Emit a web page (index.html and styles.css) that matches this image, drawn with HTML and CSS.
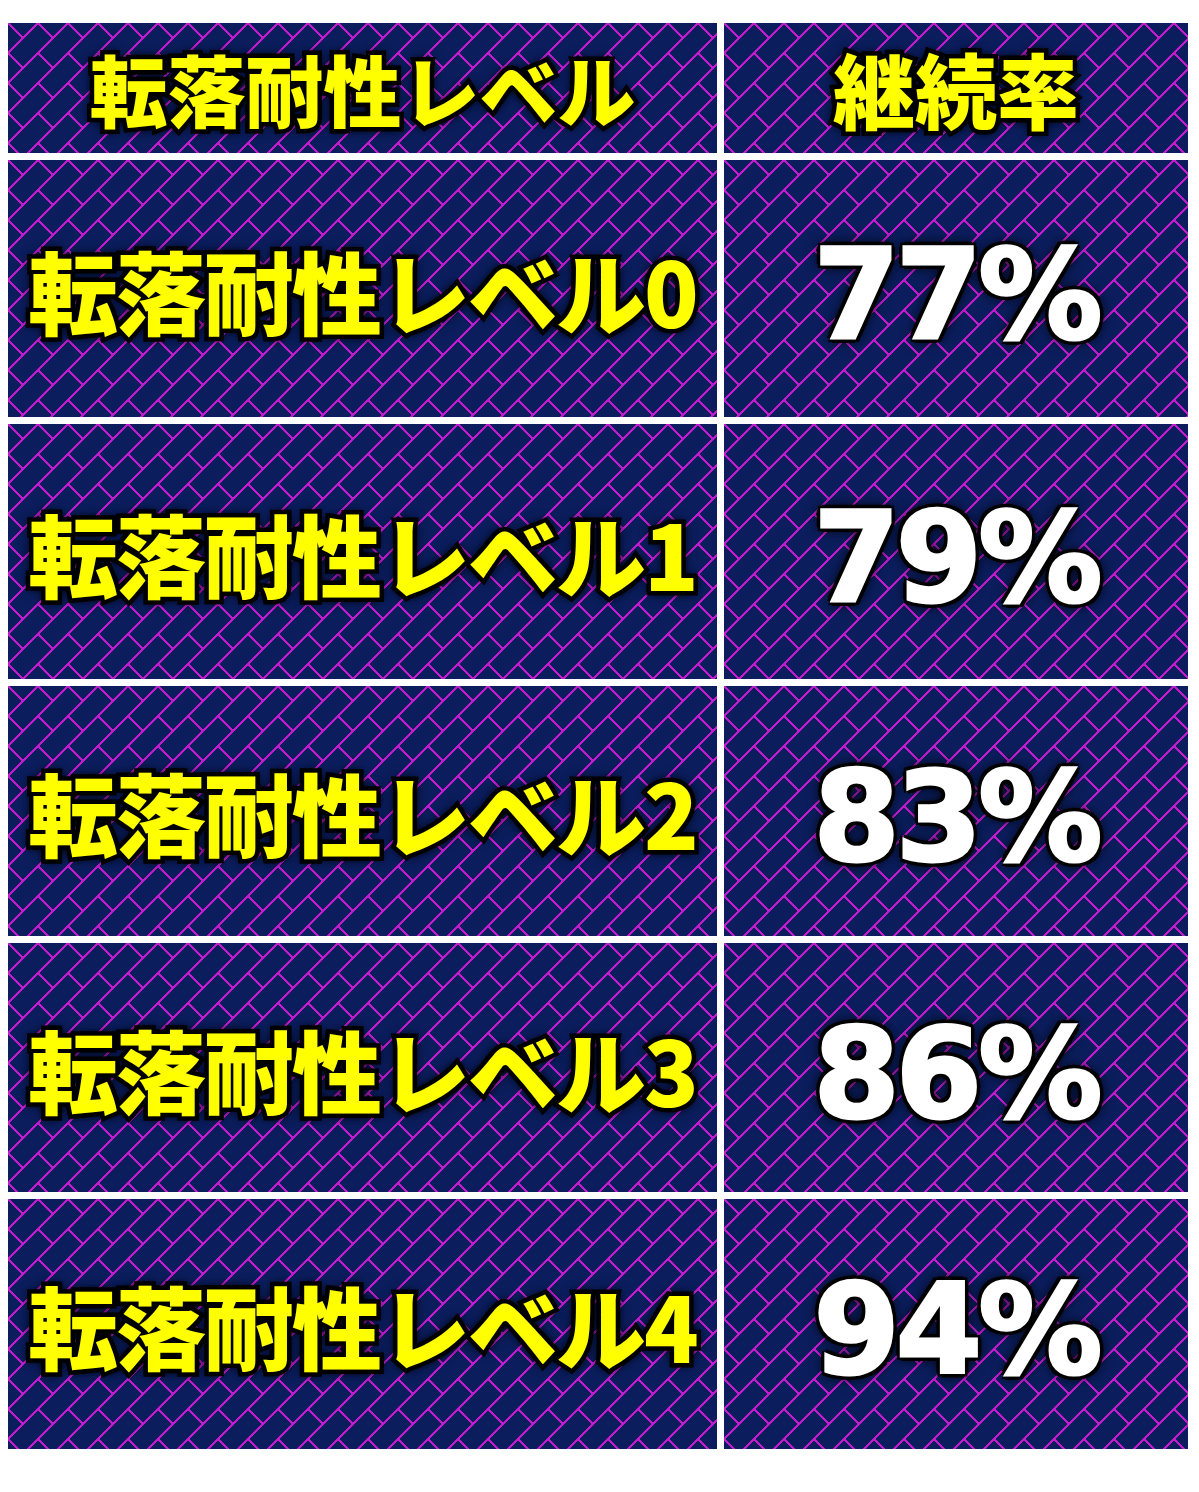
FILE: index.html
```html
<!DOCTYPE html>
<html lang="ja">
<head>
<meta charset="utf-8">
<title>転落耐性レベル</title>
<link rel="stylesheet" href="styles.css">
</head>
<body>
<div class="page">
  <div class="table">
    <div class="cell head"><span class="jp">転落耐性レベル</span></div>
    <div class="cell head"><span class="jp wide">継続率</span></div>
    <div class="cell"><span class="jp big">転落耐性レベル0</span></div>
    <div class="cell"><span class="pct">77%</span></div>
    <div class="cell"><span class="jp big">転落耐性レベル1</span></div>
    <div class="cell"><span class="pct">79%</span></div>
    <div class="cell"><span class="jp big">転落耐性レベル2</span></div>
    <div class="cell"><span class="pct">83%</span></div>
    <div class="cell"><span class="jp big">転落耐性レベル3</span></div>
    <div class="cell"><span class="pct">86%</span></div>
    <div class="cell"><span class="jp big">転落耐性レベル4</span></div>
    <div class="cell"><span class="pct">94%</span></div>
  </div>
</div>
</body>
</html>
```
FILE: styles.css
```css
html, body {
  margin: 0;
  padding: 0;
  background: #ffffff;
}

.page {
  padding: 23px 11px 0 8px;
  width: 1180px;
  height: 1469px;
}

.table {
  display: grid;
  grid-template-columns: 709px 464px;
  grid-template-rows: 130px 257px 255px 250px 249px 250px;
  gap: 7px;
}

.cell {
  display: flex;
  align-items: center;
  justify-content: center;
  background-color: #0b1d5c;
  background-image: url("data:image/svg+xml,%3Csvg xmlns='http://www.w3.org/2000/svg' width='30' height='30' shape-rendering='crispEdges'%3E%3Cg stroke='%23c01ccc' stroke-width='2.3' fill='none'%3E%3Cpath d='M-5 35L35 -5M-5 5L5 -5M25 35L35 25M0 0L15 15M30 0L45 15M0 30L15 45M30 30L45 45M-15 15L0 30M-15 -15L0 0'/%3E%3C/g%3E%3C/svg%3E");
  background-size: 30px 30px;
  overflow: hidden;
}

.jp {
  font-family: "Noto Sans CJK JP", "Noto Sans", sans-serif;
  font-weight: 900;
  font-size: 78px;
  line-height: 1;
  color: #ffff00;
  -webkit-text-stroke: 9px #000000;
  paint-order: stroke fill;
  text-shadow: 0 0 6px #000, 0 0 10px #000, 0 0 14px rgba(0,0,0,0.8);
  white-space: nowrap;
}

.jp.wide {
  font-size: 82px;
}

.jp.big {
  font-size: 90px;
  letter-spacing: -2px;
}

.pct {
  font-family: "DejaVu Sans", "Liberation Sans", sans-serif;
  font-weight: 700;
  font-size: 124px;
  line-height: 1;
  letter-spacing: -4px;
  color: #ffffff;
  -webkit-text-stroke: 3px #ffffff;
  text-shadow:
    5px 0 0 #000, -5px 0 0 #000, 0 5px 0 #000, 0 -5px 0 #000,
    4px 4px 0 #000, -4px 4px 0 #000, 4px -4px 0 #000, -4px -4px 0 #000,
    0 0 10px #000, 0 0 16px #000;
  white-space: nowrap;
  margin-top: 12px;
}
```
